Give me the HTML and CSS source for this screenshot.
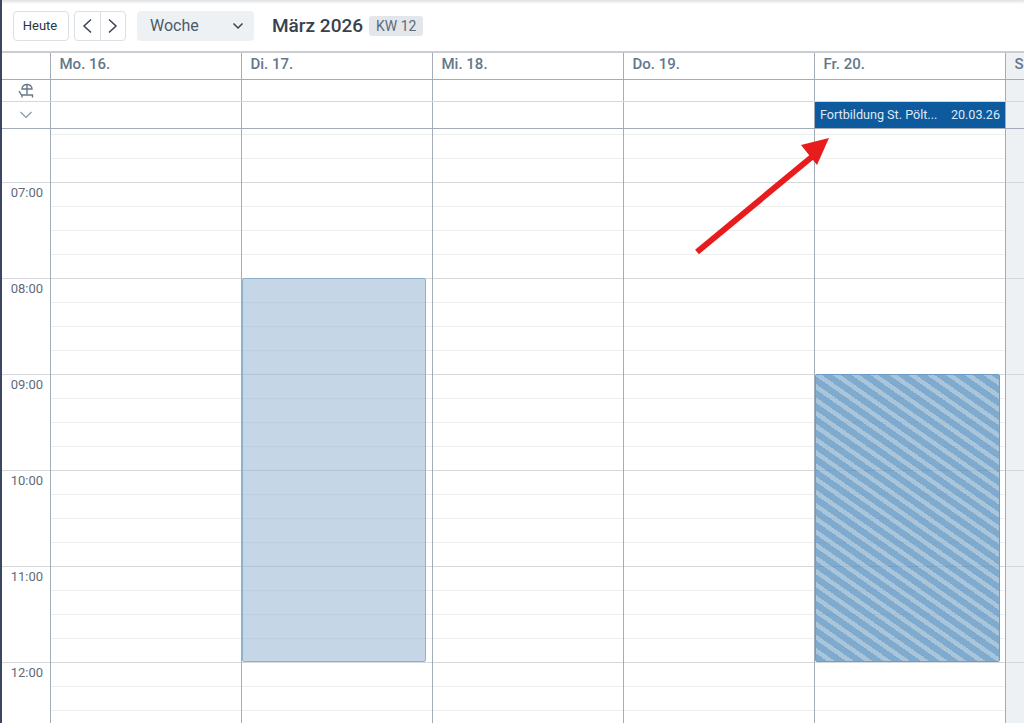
FILE: index.html
```html
<!DOCTYPE html>
<html lang="de">

<head>
    <meta charset="UTF-8">
    <meta name="viewport" content="width=device-width, initial-scale=1.0">
    <title>Kalender</title>
    <link rel="stylesheet" href="styles.css">
</head>

<body>
    <div class="page">
        <div class="toolbar">
            <button class="btn">Heute</button>
            <div class="btnGroup">
                <button class="arrowBtn">
                    <svg width="12" height="18" viewBox="0 0 12 18"><path d="M10 2.500 3 9l7 6.500" /></svg>
                </button>
                <button class="arrowBtn">
                    <svg width="12" height="18" viewBox="0 0 12 18"><path d="M2 2.500 9 9l-7 6.500" /></svg>
                </button>
            </div>
            <div class="viewSelect">
                <span class="viewLabel">Woche</span>
                <svg width="12" height="8" viewBox="0 0 12 8"><path d="M1.500 1.500 6 6l4.500-4.500" /></svg>
            </div>
            <div class="title">März 2026</div>
            <div class="weekBadge">KW 12</div>
        </div>

        <div class="dayHead">
            <div class="corner"></div>
            <div class="dayName">Mo. 16.</div>
            <div class="dayName">Di. 17.</div>
            <div class="dayName">Mi. 18.</div>
            <div class="dayName">Do. 19.</div>
            <div class="dayName">Fr. 20.</div>
            <div class="dayName weekend">Sa. 21.</div>
        </div>

        <div class="allDay holidayRow">
            <div class="corner">
                <svg class="sideIcon" width="18" height="16" viewBox="0 0 18 16">
                    <path d="M5 6C5 3 7.500 1.500 10 1.500S15 3 15 6z" />
                    <path d="M10 1.500v10" />
                    <path d="M2 8 4.500 12H16M5 12v2.500M15.500 12v2.500" />
                </svg>
            </div>
            <div class="cell"></div>
            <div class="cell"></div>
            <div class="cell"></div>
            <div class="cell"></div>
            <div class="cell"></div>
            <div class="cell weekend"></div>
        </div>

        <div class="allDay bannerRow">
            <div class="corner">
                <svg class="sideIcon chevron" width="14" height="8" viewBox="0 0 14 8"><path d="M1.500 1 7 6.500 12.500 1" /></svg>
            </div>
            <div class="cell"></div>
            <div class="cell"></div>
            <div class="cell"></div>
            <div class="cell"></div>
            <div class="cell">
                <div class="banner">
                    <span class="bannerName">Fortbildung St. Pölt...</span>
                    <span>20.03.26</span>
                </div>
            </div>
            <div class="cell weekend"></div>
        </div>

        <div class="timeGrid">
            <div class="times">
                <div class="timeGap"></div>
                <div class="time">07:00</div>
                <div class="time">08:00</div>
                <div class="time">09:00</div>
                <div class="time">10:00</div>
                <div class="time">11:00</div>
                <div class="time">12:00</div>
            </div>
            <div class="day"></div>
            <div class="day">
                <div class="slot slotPlain"></div>
            </div>
            <div class="day"></div>
            <div class="day"></div>
            <div class="day">
                <div class="slot slotStriped"></div>
            </div>
            <div class="day weekend"></div>
        </div>

        <svg class="pointer" width="140" height="122" viewBox="0 0 140 122">
            <path class="pointerLine" d="M4 116 120 20" />
            <path class="pointerHead" d="M136 2 108 9 124 29z" />
        </svg>
    </div>
</body>

</html>
```

FILE: styles.css
```css
* {
    box-sizing: border-box;
}

body {
    margin: 0;
    padding: 0;
    font-family: Roboto, "Liberation Sans", sans-serif;
    background-color: #fff;
}

.page {
    position: relative;
    width: 1024px;
    height: 723px;
    overflow: hidden;
    border-left: 2px solid #3b4660;
    box-shadow: inset 0 4px 3px -2px #dfe1e4;
}

/* toolbar */
.toolbar {
    height: 51px;
    padding: 11px 0 0 11px;
    display: flex;
    align-items: flex-start;
}

.btn {
    width: 56px;
    height: 30px;
    padding: 0 2px 2px 0;
    font-family: inherit;
    font-size: 13px;
    color: #2b3440;
    background-color: #fff;
    border: 1px solid #dcdfe4;
    border-radius: 4px;
}

.btnGroup {
    display: flex;
    width: 52px;
    height: 30px;
    margin-left: 5px;
    border: 1px solid #dcdfe4;
    border-radius: 4px;
}

.arrowBtn {
    flex: 1;
    padding: 0;
    display: flex;
    align-items: center;
    justify-content: center;
    background: none;
    border: none;
}

.arrowBtn+.arrowBtn {
    border-left: 1px solid #dcdfe4;
}

.arrowBtn svg path {
    fill: none;
    stroke: #39434f;
    stroke-width: 1.5;
}

.viewSelect {
    width: 117px;
    height: 30px;
    margin-left: 11px;
    padding: 0 10px 0 13px;
    display: flex;
    align-items: center;
    justify-content: space-between;
    font-size: 16px;
    color: #4c5a69;
    background-color: #eef1f4;
    border-radius: 4px;
}

.viewLabel {
    padding-bottom: 2px;
}

.viewSelect svg path {
    fill: none;
    stroke: #39434f;
    stroke-width: 1.5;
}

.title {
    margin-left: 18px;
    font-size: 19px;
    font-weight: 500;
    line-height: 30px;
    color: #37424f;
}

.weekBadge {
    height: 20px;
    margin: 5px 0 0 6px;
    padding: 0 7px;
    font-size: 14px;
    line-height: 20px;
    color: #5d6b7a;
    background-color: #e3e6eb;
    border-radius: 3px;
}

/* kopfzeilen */
.dayHead,
.allDay {
    display: grid;
    grid-template-columns: 48px repeat(5, 191px) 1fr;
}

.dayHead {
    height: 29px;
    border-top: 2px solid #c9cdd3;
    border-bottom: 1px solid #a4acb8;
}

.holidayRow {
    height: 22px;
    border-bottom: 1px solid #d3d7dc;
}

.bannerRow {
    height: 27px;
    border-bottom: 1px solid #a4acb8;
}

.corner {
    display: flex;
    align-items: center;
    justify-content: center;
}

.sideIcon path {
    fill: none;
    stroke: #66778a;
    stroke-width: 1.4;
}

.chevron path {
    stroke: #8293a4;
    stroke-width: 1.1;
}

.dayName {
    padding-left: 8.500px;
    font-size: 15px;
    font-weight: 500;
    line-height: 23px;
    color: #64788c;
    border-left: 1px solid #a4acb8;
    white-space: nowrap;
}

.cell {
    border-left: 1px solid #a4acb8;
}

.weekend {
    background-color: #eef1f4;
}

.banner {
    height: 26px;
    margin-right: -1px;
    padding: 0 6px 2px 5px;
    display: flex;
    align-items: center;
    justify-content: space-between;
    font-size: 12.6px;
    color: #dfe9f3;
    background-color: #0d5a9e;
}

.bannerName {
    white-space: nowrap;
}

/* stundenraster */
.timeGrid {
    display: grid;
    grid-template-columns: 48px repeat(5, 191px) 1fr;
    height: 594px;
}

.times {
    display: flex;
    flex-direction: column;
}

.timeGap {
    flex: 0 0 53px;
}

.time {
    flex: 0 0 96px;
    padding: 2px 7px 0 0;
    font-size: 13px;
    line-height: 16px;
    text-align: right;
    color: #5d6b7a;
    border-top: 1px solid #d5d8dc;
}

.day {
    position: relative;
    border-left: 1px solid #a4acb8;
    background-image:
        repeating-linear-gradient(to bottom, #d5d8dc 0, #d5d8dc 1px, transparent 1px, transparent 96px),
        repeating-linear-gradient(to bottom, #eceef0 0, #eceef0 1px, transparent 1px, transparent 24px);
    background-position: 0 53px, 0 5px;
    background-repeat: no-repeat;
    background-size: 100% 100%;
}

.slot {
    position: absolute;
    left: 0;
    width: 184px;
    height: 384px;
    border: 1px solid #8fb0cc;
    border-radius: 2px;
}

.slotPlain {
    top: 149px;
    background-color: rgba(139, 175, 208, 0.5);
}

.slotStriped {
    top: 245px;
    width: 185px;
    height: 288px;
    border-color: #6f9cc6;
    background-image: repeating-linear-gradient(35deg, rgba(86, 141, 190, 0.75) 0, rgba(86, 141, 190, 0.75) 6.300px, rgba(140, 178, 208, 0.75) 6.300px, rgba(140, 178, 208, 0.75) 10.800px);
}

/* roter pfeil */
.pointer {
    position: absolute;
    left: 691px;
    top: 136px;
}

.pointerLine {
    fill: none;
    stroke: #e81c1c;
    stroke-width: 6;
}

.pointerHead {
    fill: #e81c1c;
}
```
